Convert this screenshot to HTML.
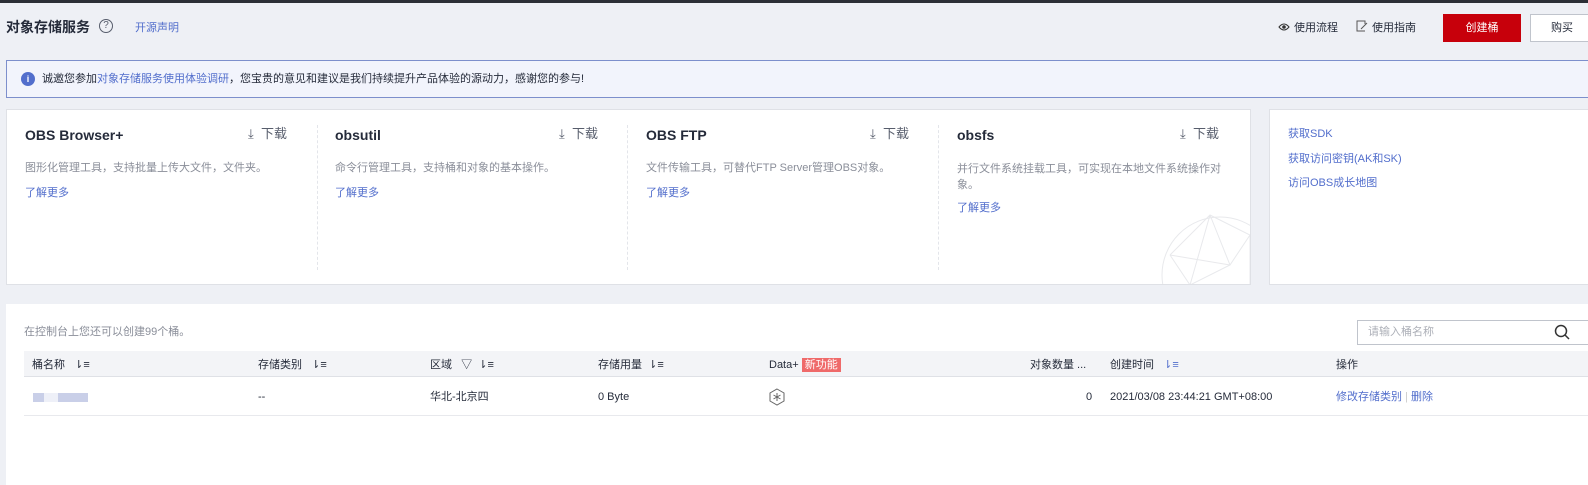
<!DOCTYPE html>
<html><head><meta charset="utf-8"><style>
*{margin:0;padding:0;box-sizing:border-box}
html,body{width:1588px;height:485px;overflow:hidden}
body{background:#eef0f5;font-family:"Liberation Sans","Noto Sans CJK SC",sans-serif;font-size:12px;line-height:14px;color:#252b3a;position:relative}
.a{position:absolute;white-space:nowrap}
.blue{color:#526ecc}
.gray{color:#8a8e99}
.card{background:#fff;border:1px solid #dfe1e6}
.dl{font-size:13px;color:#575d6c}
.ttl{font-size:14px;font-weight:bold;color:#252b3a;font-family:"Liberation Sans","Noto Sans CJK SC",sans-serif}
.vd{border-left:1px dashed #e3e5ea;width:0}
.t{font-size:11px;line-height:14px}
</style></head><body>
<div class="a" style="left:0;top:0;width:1588px;height:3px;background:#2c2f36"></div>
<div class="a" style="left:6px;top:20px;font-size:14px;font-weight:bold">对象存储服务</div>
<div class="a" style="left:99px;top:19px;width:14px;height:14px;border:1px solid #575d6c;border-radius:50%;font-size:10px;text-align:center;line-height:12px;color:#575d6c">?</div>
<div class="a blue" style="left:135px;top:21px;font-size:11px">开源声明</div>
<svg class="a" style="left:1278px;top:22px" width="12" height="10"><path d="M1 5Q6 -1 11 5Q6 11 1 5Z" fill="none" stroke="#333"/><circle cx="6" cy="5" r="1.8" fill="#333"/></svg>
<div class="a t" style="left:1294px;top:21px">使用流程</div>
<svg class="a" style="left:1356px;top:20px" width="12" height="12"><path d="M9 4V1H1V11H9" fill="none" stroke="#555"/><path d="M5 9L11 3" stroke="#555"/></svg>
<div class="a t" style="left:1372px;top:21px">使用指南</div>
<div class="a" style="left:1443px;top:14px;width:78px;height:28px;background:#c7000b;color:#fff;text-align:center;line-height:28px;font-size:11px">创建桶</div>
<div class="a" style="left:1530px;top:14px;width:58px;height:28px;background:#fff;border:1px solid #c0c4cc;border-right:none;line-height:26px;padding-left:20px;font-size:11px">购买</div>
<div class="a" style="left:6px;top:60px;width:1582px;height:38px;background:#f2f4fc;border:1px solid #7d8fcc;border-right:none"></div>
<div class="a" style="left:21px;top:72px;width:14px;height:14px;border-radius:50%;background:#526ecc;color:#fff;font-size:9px;text-align:center;line-height:14px;font-weight:bold">i</div>
<div class="a t" style="left:42px;top:72px">诚邀您参加<span class="blue">对象存储服务使用体验调研</span>，您宝贵的意见和建议是我们持续提升产品体验的源动力，感谢您的参与!</div>

<div class="a card" style="left:6px;top:109px;width:1245px;height:176px"></div>
<div class="a vd" style="left:317px;top:125px;height:145px"></div>
<div class="a vd" style="left:627px;top:125px;height:145px"></div>
<div class="a vd" style="left:938px;top:125px;height:145px"></div>

<div class="a ttl" style="left:25px;top:128px">OBS Browser+</div>
<div class="a dl" style="left:248px;top:127px">⤓&nbsp;&nbsp;下载</div>
<div class="a gray t" style="left:25px;top:161px">图形化管理工具，支持批量上传大文件，文件夹。</div>
<div class="a blue t" style="left:25px;top:186px">了解更多</div>

<div class="a ttl" style="left:335px;top:128px">obsutil</div>
<div class="a dl" style="left:559px;top:127px">⤓&nbsp;&nbsp;下载</div>
<div class="a gray t" style="left:335px;top:161px">命令行管理工具，支持桶和对象的基本操作。</div>
<div class="a blue t" style="left:335px;top:186px">了解更多</div>

<div class="a ttl" style="left:646px;top:128px">OBS FTP</div>
<div class="a dl" style="left:870px;top:127px">⤓&nbsp;&nbsp;下载</div>
<div class="a gray t" style="left:646px;top:161px">文件传输工具，可替代FTP Server管理OBS对象。</div>
<div class="a blue t" style="left:646px;top:186px">了解更多</div>

<div class="a ttl" style="left:957px;top:128px">obsfs</div>
<div class="a dl" style="left:1180px;top:127px">⤓&nbsp;&nbsp;下载</div>
<div class="a gray t" style="left:957px;top:161px;white-space:normal;width:275px;line-height:16px">并行文件系统挂载工具，可实现在本地文件系统操作对象。</div>
<div class="a blue t" style="left:957px;top:201px">了解更多</div>
<svg class="a" style="left:1150px;top:205px" width="100" height="79"><g stroke="#e8e9ec" fill="none"><circle cx="70" cy="70" r="58"/><path d="M20 50L60 10L100 30L80 60L40 80L20 50M60 10L80 60M40 80L60 10M100 30L100 80M20 50L80 60"/></g></svg>

<div class="a card" style="left:1269px;top:109px;width:319px;height:176px;border-right:none"></div>
<div class="a blue t" style="left:1288px;top:127px">获取SDK</div>
<div class="a blue t" style="left:1288px;top:152px">获取访问密钥(AK和SK)</div>
<div class="a blue t" style="left:1288px;top:176px">访问OBS成长地图</div>

<div class="a" style="left:6px;top:304px;width:1582px;height:181px;background:#fff"></div>
<div class="a gray t" style="left:24px;top:325px">在控制台上您还可以创建99个桶。</div>
<div class="a t" style="left:1357px;top:320px;width:231px;height:25px;border:1px solid #c0c4cc;border-right:none;padding-left:10px;line-height:23px;color:#adb0b8">请输入桶名称</div>
<svg class="a" style="left:1554px;top:324px" width="16" height="16"><circle cx="7" cy="7" r="5.5" fill="none" stroke="#333" stroke-width="1.5"/><path d="M11 11L15 15" stroke="#333" stroke-width="1.5"/></svg>
<div class="a" style="left:24px;top:351px;width:1564px;height:26px;background:#f3f4f7;border-bottom:1px solid #dfe1e6"></div>
<div class="a" style="left:24px;top:377px;width:1564px;height:39px;border-bottom:1px solid #e8e9ed"></div>
<div class="a t" style="top:358px;left:32px">桶名称&nbsp;&nbsp;&nbsp;⇂≡</div>
<div class="a t" style="top:358px;left:258px">存储类别&nbsp;&nbsp;&nbsp;⇂≡</div>
<div class="a t" style="top:358px;left:430px">区域&nbsp;&nbsp;&nbsp;▽&nbsp;&nbsp;⇂≡</div>
<div class="a t" style="top:358px;left:598px">存储用量&nbsp;&nbsp;⇂≡</div>
<div class="a t" style="top:358px;left:769px">Data+ <span style="background:#ef6a6a;color:#fff;padding:1px 3px">新功能</span></div>
<div class="a t" style="top:358px;left:1030px">对象数量 ...</div>
<div class="a t" style="top:358px;left:1110px">创建时间&nbsp;&nbsp;&nbsp;<span class="blue">⇂≡</span></div>
<div class="a t" style="top:358px;left:1336px">操作</div>
<div class="a" style="left:33px;top:393px;width:55px;height:9px;background:linear-gradient(90deg,#c9cfe8 0 20%,#eef0f8 20% 45%,#c9cfe8 45% 100%)"></div>
<div class="a t" style="top:390px;left:258px">--</div>
<div class="a t" style="top:390px;left:430px">华北-北京四</div>
<div class="a t" style="top:390px;left:598px">0 Byte</div>
<svg class="a" style="left:769px;top:388px" width="16" height="18"><path d="M8 1L15 5V13L8 17L1 13V5Z" fill="none" stroke="#666"/><path d="M8 5V13M4.5 7L11.5 11M11.5 7L4.5 11" stroke="#666"/></svg>
<div class="a t" style="top:390px;left:1086px">0</div>
<div class="a t" style="top:390px;left:1110px">2021/03/08 23:44:21 GMT+08:00</div>
<div class="a blue t" style="top:390px;left:1336px">修改存储类别 <span style="color:#ccc">|</span> 删除</div>
</body></html>
